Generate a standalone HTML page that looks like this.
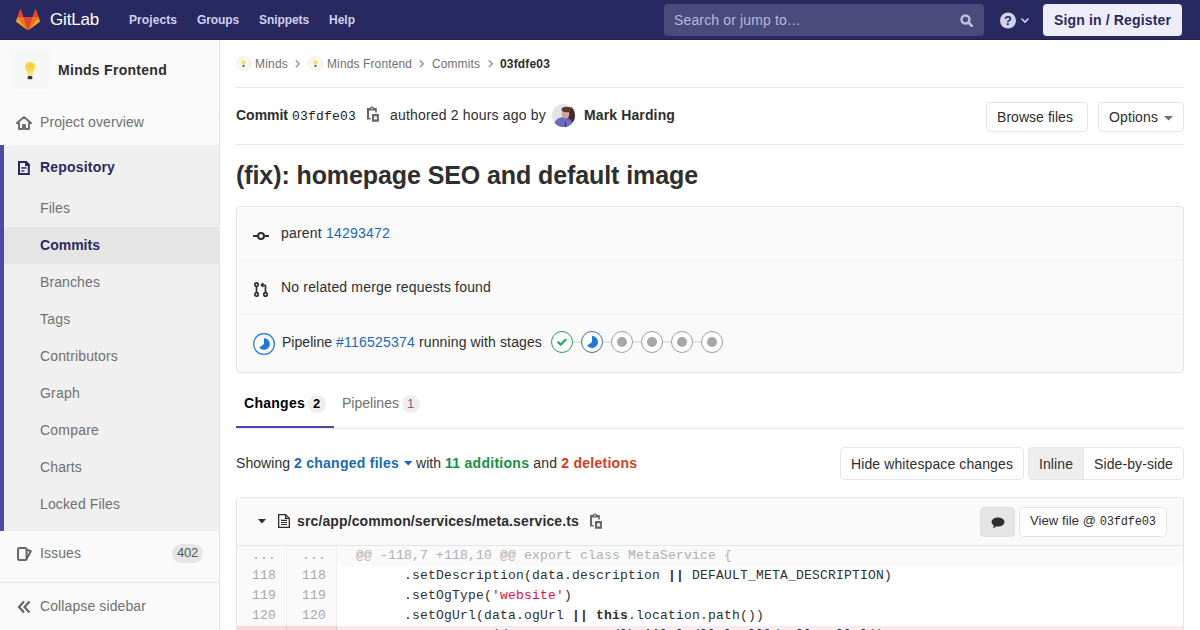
<!DOCTYPE html>
<html><head><meta charset="utf-8"><style>
*{box-sizing:border-box;margin:0;padding:0}
html,body{width:1200px;height:630px;overflow:hidden;background:#fff;font-family:"Liberation Sans",sans-serif;color:#2e2e2e;font-size:14px}
.abs{position:absolute}
.t{position:absolute;white-space:pre;line-height:1}
#hdr{position:absolute;left:0;top:0;width:1200px;height:40px;background:#292961;border-bottom:1px solid #1f1f50}
.btn{position:absolute;border:1px solid #e5e5e5;border-radius:4px;background:#fff}
.hr{position:absolute;height:1px;background:#e5e5e5}
.ln{position:absolute;width:50px;height:20px;background:#fafafa;border-right:1px solid #f0f0f0;color:#a8a8a8;font-family:"Liberation Mono",monospace;font-size:13px;letter-spacing:.2px;text-align:right;padding-right:10px;line-height:20px;white-space:pre}
.code{position:absolute;left:337px;width:846px;height:20px;font-family:"Liberation Mono",monospace;font-size:13px;letter-spacing:.2px;line-height:20px;white-space:pre;padding-left:19px;color:#2e2e2e}
</style></head><body>
<div id="hdr"></div><svg class="abs" style="left:16px;top:9px" width="24" height="22" viewBox="0 0 24 22">
<path fill="#e24329" d="M12 21.6l4.4-13.6H7.6z"/><path fill="#fc6d26" d="M12 21.6L7.6 8H1.4z"/>
<path fill="#fca326" d="M1.4 8L.1 12.1c-.1.4 0 .8.3 1L12 21.6z"/><path fill="#e24329" d="M1.4 8h6.2L4.9.2c-.1-.4-.7-.4-.9 0z"/>
<path fill="#fc6d26" d="M12 21.6L16.4 8h6.2z"/><path fill="#fca326" d="M22.6 8l1.3 4.1c.1.4 0 .8-.3 1L12 21.6z"/>
<path fill="#e24329" d="M22.6 8h-6.2L19.1.2c.1-.4.7-.4.9 0z"/></svg><div class="t" style="left:50px;top:11px;font-size:17px;font-family:'Liberation Sans',sans-serif;"><span style="letter-spacing:-0.181px;font-weight:normal;font-family:'Liberation Sans',sans-serif;font-size:17px;color:#fff;">GitLab</span></div>
<div class="t" style="left:129px;top:14px;font-size:12px;font-family:'Liberation Sans',sans-serif;"><span style="letter-spacing:0.081px;font-weight:bold;font-family:'Liberation Sans',sans-serif;font-size:12px;color:#d1d1f0;">Projects</span></div>
<div class="t" style="left:197px;top:14px;font-size:12px;font-family:'Liberation Sans',sans-serif;"><span style="letter-spacing:-0.111px;font-weight:bold;font-family:'Liberation Sans',sans-serif;font-size:12px;color:#d1d1f0;">Groups</span></div>
<div class="t" style="left:259px;top:14px;font-size:12px;font-family:'Liberation Sans',sans-serif;"><span style="letter-spacing:-0.084px;font-weight:bold;font-family:'Liberation Sans',sans-serif;font-size:12px;color:#d1d1f0;">Snippets</span></div>
<div class="t" style="left:329px;top:14px;font-size:12px;font-family:'Liberation Sans',sans-serif;"><span style="letter-spacing:-0.001px;font-weight:bold;font-family:'Liberation Sans',sans-serif;font-size:12px;color:#d1d1f0;">Help</span></div>
<div class="abs" style="left:664px;top:4px;width:320px;height:32px;border-radius:4px;background:#4a4a7d"></div><div class="t" style="left:674px;top:13px;font-size:14px;font-family:'Liberation Sans',sans-serif;"><span style="letter-spacing:0.139px;font-weight:normal;font-family:'Liberation Sans',sans-serif;font-size:14px;color:#b8b8d9;">Search or jump to…</span></div>
<svg class="abs" style="left:960px;top:14px" width="14" height="13" viewBox="0 0 14 13"><circle cx="5.5" cy="5.5" r="4" fill="none" stroke="#c0c0e0" stroke-width="2.4"/><path d="M8.5 8.5l3.3 3.3" stroke="#c0c0e0" stroke-width="2.6" stroke-linecap="round"/></svg><svg class="abs" style="left:1000px;top:12px" width="32" height="17" viewBox="0 0 32 17"><circle cx="8" cy="8.5" r="8" fill="#d1d1f0"/>
<text x="8" y="13.2" text-anchor="middle" font-family="Liberation Sans" font-weight="bold" font-size="13" fill="#292961">?</text>
<path d="M21.5 6.5l3.5 3.5 3.5-3.5" fill="none" stroke="#d1d1f0" stroke-width="1.6"/></svg><div class="abs" style="left:1043px;top:4px;width:139px;height:32px;border-radius:4px;background:#eeeefb"></div><div class="t" style="left:1054px;top:13px;font-size:14px;font-family:'Liberation Sans',sans-serif;"><span style="letter-spacing:0.147px;font-weight:bold;font-family:'Liberation Sans',sans-serif;font-size:14px;color:#292961;">Sign in / Register</span></div>
<div class="abs" style="left:0;top:40px;width:220px;height:590px;background:#fafafa;border-right:1px solid #e5e5e5"></div><div class="abs" style="left:10px;top:49px;width:40px;height:40px;border-radius:4px;background:#f7f7f7"></div><svg class="abs" style="left:23px;top:61px" width="14" height="19" viewBox="0 0 14 19"><defs><radialGradient id="bg1" cx="50%" cy="45%" r="55%"><stop offset="0" stop-color="#f9c23c"/><stop offset="1" stop-color="#f7e35a"/></radialGradient></defs>
<path d="M3.6 9.5h6.8l-1 5.5H4.6z" fill="#f3e47c"/><circle cx="7" cy="6" r="5.3" fill="url(#bg1)"/><rect x="4.6" y="15" width="4.8" height="3.2" rx="1" fill="#3a3a3a"/></svg><div class="t" style="left:58px;top:63px;font-size:14px;font-family:'Liberation Sans',sans-serif;"><span style="letter-spacing:0.287px;font-weight:bold;font-family:'Liberation Sans',sans-serif;font-size:14px;color:#2e2e2e;">Minds Frontend</span></div>
<svg class="abs" style="left:16px;top:116px" width="16" height="14" viewBox="0 0 16 14"><path d="M8 1L1 7h2v6h4V9h2v4h4V7h2z" fill="none" stroke="#707070" stroke-width="2" stroke-linejoin="round"/></svg><div class="t" style="left:40px;top:115px;font-size:14px;font-family:'Liberation Sans',sans-serif;"><span style="letter-spacing:0.081px;font-weight:normal;font-family:'Liberation Sans',sans-serif;font-size:14px;color:#707070;">Project overview</span></div>
<div class="abs" style="left:0;top:145px;width:219px;height:386px;background:#f0f0f0;border-left:4px solid #4b4ba3"></div><svg class="abs" style="left:18px;top:161px" width="12" height="14" viewBox="0 0 12 14"><path d="M1 1h6.8L10.8 4v9H1z" fill="none" stroke="#292961" stroke-width="2"/><path d="M7 0h1.5l3.5 3.5V5H7z" fill="#292961"/><rect x="3.2" y="6.2" width="5.4" height="1.5" fill="#292961"/><rect x="3.2" y="9.3" width="3.3" height="1.3" fill="#292961"/></svg><div class="t" style="left:40px;top:160px;font-size:14px;font-family:'Liberation Sans',sans-serif;"><span style="letter-spacing:0.188px;font-weight:bold;font-family:'Liberation Sans',sans-serif;font-size:14px;color:#292961;">Repository</span></div>
<div class="abs" style="left:4px;top:227px;width:215px;height:37px;background:#e5e5e5"></div><div class="t" style="left:40px;top:201px;font-size:14px;font-family:'Liberation Sans',sans-serif;"><span style="letter-spacing:0.088px;font-weight:normal;font-family:'Liberation Sans',sans-serif;font-size:14px;color:#707070;">Files</span></div>
<div class="t" style="left:40px;top:238px;font-size:14px;font-family:'Liberation Sans',sans-serif;"><span style="letter-spacing:0.015px;font-weight:bold;font-family:'Liberation Sans',sans-serif;font-size:14px;color:#292961;">Commits</span></div>
<div class="t" style="left:40px;top:275px;font-size:14px;font-family:'Liberation Sans',sans-serif;"><span style="letter-spacing:0.107px;font-weight:normal;font-family:'Liberation Sans',sans-serif;font-size:14px;color:#707070;">Branches</span></div>
<div class="t" style="left:40px;top:312px;font-size:14px;font-family:'Liberation Sans',sans-serif;"><span style="letter-spacing:0.219px;font-weight:normal;font-family:'Liberation Sans',sans-serif;font-size:14px;color:#707070;">Tags</span></div>
<div class="t" style="left:40px;top:349px;font-size:14px;font-family:'Liberation Sans',sans-serif;"><span style="letter-spacing:0.145px;font-weight:normal;font-family:'Liberation Sans',sans-serif;font-size:14px;color:#707070;">Contributors</span></div>
<div class="t" style="left:40px;top:386px;font-size:14px;font-family:'Liberation Sans',sans-serif;"><span style="letter-spacing:0.218px;font-weight:normal;font-family:'Liberation Sans',sans-serif;font-size:14px;color:#707070;">Graph</span></div>
<div class="t" style="left:40px;top:423px;font-size:14px;font-family:'Liberation Sans',sans-serif;"><span style="letter-spacing:0.203px;font-weight:normal;font-family:'Liberation Sans',sans-serif;font-size:14px;color:#707070;">Compare</span></div>
<div class="t" style="left:40px;top:460px;font-size:14px;font-family:'Liberation Sans',sans-serif;"><span style="letter-spacing:0.128px;font-weight:normal;font-family:'Liberation Sans',sans-serif;font-size:14px;color:#707070;">Charts</span></div>
<div class="t" style="left:40px;top:497px;font-size:14px;font-family:'Liberation Sans',sans-serif;"><span style="letter-spacing:0.117px;font-weight:normal;font-family:'Liberation Sans',sans-serif;font-size:14px;color:#707070;">Locked Files</span></div>
<svg class="abs" style="left:17px;top:547px" width="15" height="14" viewBox="0 0 15 14"><rect x="1" y="1" width="8.6" height="12" rx="1.5" fill="none" stroke="#666" stroke-width="2"/><path d="M9.6 2.6l4.2 1.6-4.2 7.6" fill="none" stroke="#666" stroke-width="2" stroke-linejoin="round"/></svg><div class="t" style="left:40px;top:546px;font-size:14px;font-family:'Liberation Sans',sans-serif;"><span style="letter-spacing:0.090px;font-weight:normal;font-family:'Liberation Sans',sans-serif;font-size:14px;color:#707070;">Issues</span></div>
<div class="abs" style="left:172px;top:544px;width:31px;height:19px;border-radius:10px;background:#e5e5e5"></div><div class="t" style="left:177px;top:546px;font-size:13px;font-family:'Liberation Sans',sans-serif;"><span style="letter-spacing:-0.230px;font-weight:normal;font-family:'Liberation Sans',sans-serif;font-size:13px;color:#555;">402</span></div>
<div class="abs" style="left:0;top:582px;width:219px;height:1px;background:#e5e5e5"></div><svg class="abs" style="left:17px;top:600px" width="14" height="14" viewBox="0 0 14 14"><path d="M7 1.5L2 7l5 5.5M12.5 1.5L7.5 7l5 5.5" fill="none" stroke="#666" stroke-width="2.2"/></svg><div class="t" style="left:40px;top:599px;font-size:14px;font-family:'Liberation Sans',sans-serif;"><span style="letter-spacing:0.107px;font-weight:normal;font-family:'Liberation Sans',sans-serif;font-size:14px;color:#707070;">Collapse sidebar</span></div>
<svg class="abs" style="left:236px;top:56px" width="16" height="16"><circle cx="7.5" cy="7.5" r="7" fill="#f7f7f2" stroke="#ececec"/><ellipse cx="7.5" cy="6.5" rx="2.2" ry="2.5" fill="#f5e26a"/><rect x="6.5" y="9" width="2" height="2" fill="#666"/></svg><div class="t" style="left:255px;top:58px;font-size:12px;font-family:'Liberation Sans',sans-serif;"><span style="letter-spacing:0.198px;font-weight:normal;font-family:'Liberation Sans',sans-serif;font-size:12px;color:#707070;">Minds</span></div>
<svg class="abs" style="left:295px;top:59px" width="6" height="10"><path d="M.8 1.2L4.3 4.7.8 8.2" fill="none" stroke="#9a9a9a" stroke-width="1.5"/></svg><svg class="abs" style="left:308px;top:56px" width="16" height="16"><circle cx="7.5" cy="7.5" r="7" fill="#f7f7f2" stroke="#ececec"/><ellipse cx="7.5" cy="6.5" rx="2.2" ry="2.5" fill="#f5e26a"/><rect x="6.5" y="9" width="2" height="2" fill="#666"/></svg><div class="t" style="left:327px;top:58px;font-size:12px;font-family:'Liberation Sans',sans-serif;"><span style="letter-spacing:0.116px;font-weight:normal;font-family:'Liberation Sans',sans-serif;font-size:12px;color:#707070;">Minds Frontend</span></div>
<svg class="abs" style="left:419px;top:59px" width="6" height="10"><path d="M.8 1.2L4.3 4.7.8 8.2" fill="none" stroke="#9a9a9a" stroke-width="1.5"/></svg><div class="t" style="left:432px;top:58px;font-size:12px;font-family:'Liberation Sans',sans-serif;"><span style="letter-spacing:0.095px;font-weight:normal;font-family:'Liberation Sans',sans-serif;font-size:12px;color:#707070;">Commits</span></div>
<svg class="abs" style="left:488px;top:59px" width="6" height="10"><path d="M.8 1.2L4.3 4.7.8 8.2" fill="none" stroke="#9a9a9a" stroke-width="1.5"/></svg><div class="t" style="left:500px;top:58px;font-size:12px;font-family:'Liberation Sans',sans-serif;"><span style="letter-spacing:0.164px;font-weight:bold;font-family:'Liberation Sans',sans-serif;font-size:12px;color:#2e2e2e;">03fdfe03</span></div>
<div class="hr" style="left:236px;top:87px;width:948px"></div><div class="t" style="left:236px;top:108px;font-size:14px;font-family:'Liberation Sans',sans-serif;"><span style="letter-spacing:-0.018px;font-weight:bold;font-family:'Liberation Sans',sans-serif;font-size:14px;color:#2e2e2e;">Commit</span><span style="letter-spacing:0.110px;font-weight:normal;font-family:'Liberation Sans',sans-serif;font-size:14px;"> </span><span style="letter-spacing:0.199px;font-weight:normal;font-family:'Liberation Mono',monospace;font-size:13px;color:#1a1a1a;">03fdfe03</span></div>
<svg class="abs" style="left:367px;top:106px" width="12" height="16" viewBox="0 0 12 16"><path fill="#666" fill-rule="evenodd" d="M0 2H2.2L4.9 .2 7.6 2H9.8V6.6H8.2V4.5H2.1V11.9H3.6V13.6H0ZM4.1 2.5a.8.8 0 1 0 1.6 0a.8.8 0 1 0-1.6 0Z"/><path fill="#666" fill-rule="evenodd" d="M5 8H11.9V15.7H5ZM7.1 10.2V13.6H9.9V10.2Z"/></svg><div class="t" style="left:390px;top:108px;font-size:14px;font-family:'Liberation Sans',sans-serif;"><span style="letter-spacing:0.184px;font-weight:normal;font-family:'Liberation Sans',sans-serif;font-size:14px;color:#2e2e2e;">authored 2 hours ago by</span></div>
<svg class="abs" style="left:552px;top:104px" width="23" height="23" viewBox="0 0 23 23"><defs><clipPath id="avc"><circle cx="11.5" cy="11.5" r="11.5"/></clipPath><filter id="bl"><feGaussianBlur stdDeviation=".7"/></filter></defs><g clip-path="url(#avc)"><rect width="23" height="23" fill="#e4e2e6"/><g filter="url(#bl)"><ellipse cx="20" cy="12" rx="5" ry="9" fill="#4a2830"/><ellipse cx="11.5" cy="22" rx="10" ry="9" fill="#6b6cc0"/><ellipse cx="13.5" cy="10" rx="3.8" ry="4.3" fill="#d2a39a"/><ellipse cx="14.5" cy="5.5" rx="5" ry="2.8" fill="#5b3a2c"/><path d="M13.5 16l1 7h-2z" fill="#3b3a78"/></g></g></svg><div class="t" style="left:584px;top:108px;font-size:14px;font-family:'Liberation Sans',sans-serif;"><span style="letter-spacing:0.128px;font-weight:bold;font-family:'Liberation Sans',sans-serif;font-size:14px;color:#2e2e2e;">Mark Harding</span></div>
<div class="btn" style="left:986px;top:102px;width:102px;height:30px"></div><div class="t" style="left:997px;top:110px;font-size:14px;font-family:'Liberation Sans',sans-serif;"><span style="letter-spacing:0.044px;font-weight:normal;font-family:'Liberation Sans',sans-serif;font-size:14px;color:#2e2e2e;">Browse files</span></div>
<div class="btn" style="left:1098px;top:102px;width:86px;height:30px"></div><div class="t" style="left:1109px;top:110px;font-size:14px;font-family:'Liberation Sans',sans-serif;"><span style="letter-spacing:0.107px;font-weight:normal;font-family:'Liberation Sans',sans-serif;font-size:14px;color:#2e2e2e;">Options</span></div>
<svg class="abs" style="left:1164px;top:116px" width="10" height="5"><path d="M0 0h9L4.5 4.5z" fill="#707070"/></svg><div class="hr" style="left:236px;top:144px;width:948px"></div><div class="t" style="left:236px;top:163px;font-size:25px;font-family:'Liberation Sans',sans-serif;"><span style="letter-spacing:-0.090px;font-weight:bold;font-family:'Liberation Sans',sans-serif;font-size:25px;color:#2e2e2e;">(fix): homepage SEO and default image</span></div>
<div class="abs" style="left:236px;top:206px;width:948px;height:167px;border:1px solid #e5e5e5;border-radius:4px;background:#fafafa"></div><div class="hr" style="left:237px;top:260px;width:946px;background:#f0f0f0"></div><div class="hr" style="left:237px;top:314px;width:946px;background:#f0f0f0"></div><svg class="abs" style="left:253px;top:230px" width="16" height="12" viewBox="0 0 16 12"><path d="M0 6h4.5M11.5 6H16" stroke="#2e2e2e" stroke-width="2"/><circle cx="8" cy="6" r="3" fill="none" stroke="#2e2e2e" stroke-width="2"/></svg><div class="t" style="left:281px;top:226px;font-size:14px;font-family:'Liberation Sans',sans-serif;"><span style="letter-spacing:0.202px;font-weight:normal;font-family:'Liberation Sans',sans-serif;font-size:14px;color:#2e2e2e;">parent </span><span style="letter-spacing:0.214px;font-weight:normal;font-family:'Liberation Sans',sans-serif;font-size:14px;color:#1b69b6;">14293472</span></div>
<svg class="abs" style="left:253px;top:282px" width="16" height="16" viewBox="0 0 16 16"><g fill="none" stroke="#2e2e2e" stroke-width="1.7"><circle cx="3.5" cy="2.6" r="1.7"/><circle cx="3.5" cy="12.4" r="1.7"/><circle cx="12.5" cy="12.4" r="1.7"/><path d="M3.5 4.3v6.4M12.5 10.7V4.6c0-1-.6-1.6-1.6-1.6H9"/><path d="M10.3 1.2L8.5 3l1.8 1.8"/></g></svg><div class="t" style="left:281px;top:280px;font-size:14px;font-family:'Liberation Sans',sans-serif;"><span style="letter-spacing:0.172px;font-weight:normal;font-family:'Liberation Sans',sans-serif;font-size:14px;color:#2e2e2e;">No related merge requests found</span></div>
<svg class="abs" style="left:253px;top:333px" width="22" height="22" viewBox="0 0 14 14"><path fill="#1f78d1" fill-rule="evenodd" d="M0 7a7 7 0 1 1 14 0A7 7 0 0 1 0 7zM13.2 7A6.2 6.2 0 1 0 .8 7a6.2 6.2 0 0 0 12.4 0z"/><path fill="#1f78d1" d="M7 3.3c2.1 0 3.7 1.7 3.7 3.7S9.1 10.7 7 10.7c-1.2 0-2.3-.6-3-1.5L7 7V3.3"/></svg><div class="t" style="left:282px;top:335px;font-size:14px;font-family:'Liberation Sans',sans-serif;"><span style="letter-spacing:0.033px;font-weight:normal;font-family:'Liberation Sans',sans-serif;font-size:14px;color:#2e2e2e;">Pipeline </span><span style="letter-spacing:0.214px;font-weight:normal;font-family:'Liberation Sans',sans-serif;font-size:14px;color:#1b69b6;">#116525374</span><span style="letter-spacing:0.124px;font-weight:normal;font-family:'Liberation Sans',sans-serif;font-size:14px;color:#2e2e2e;"> running with stages</span></div>
<div class="abs" style="left:573px;top:341px;width:130px;height:2px;background:#e5e5e5"></div><svg class="abs" style="left:551px;top:331px" width="22" height="22" viewBox="0 0 22 22"><circle cx="11" cy="11" r="10.5" fill="#fff" stroke="#2a9d5c" stroke-width="1"/><path d="M7.3 11.3l2.4 2.4 4.9-4.9" fill="none" stroke="#1aaa55" stroke-width="2.2" stroke-linecap="round" stroke-linejoin="round"/></svg><svg class="abs" style="left:581px;top:331px" width="22" height="22" viewBox="0 0 22 22"><circle cx="11" cy="11" r="10.5" fill="#fff" stroke="#3b6fb6" stroke-width="1"/><path fill="#1f78d1" d="M11 5c3.3 0 6 2.7 6 6s-2.7 6-6 6c-2 0-3.7-1-4.8-2.4L11 11V5"/></svg><svg class="abs" style="left:611px;top:331px" width="22" height="22" viewBox="0 0 22 22"><circle cx="11" cy="11" r="10.5" fill="#fff" stroke="#9e9e9e" stroke-width="1"/><circle cx="11" cy="11" r="5" fill="#a7a7a7"/></svg><svg class="abs" style="left:641px;top:331px" width="22" height="22" viewBox="0 0 22 22"><circle cx="11" cy="11" r="10.5" fill="#fff" stroke="#9e9e9e" stroke-width="1"/><circle cx="11" cy="11" r="5" fill="#a7a7a7"/></svg><svg class="abs" style="left:671px;top:331px" width="22" height="22" viewBox="0 0 22 22"><circle cx="11" cy="11" r="10.5" fill="#fff" stroke="#9e9e9e" stroke-width="1"/><circle cx="11" cy="11" r="5" fill="#a7a7a7"/></svg><svg class="abs" style="left:701px;top:331px" width="22" height="22" viewBox="0 0 22 22"><circle cx="11" cy="11" r="10.5" fill="#fff" stroke="#9e9e9e" stroke-width="1"/><circle cx="11" cy="11" r="5" fill="#a7a7a7"/></svg><div class="hr" style="left:236px;top:428px;width:948px"></div><div class="abs" style="left:236px;top:426px;width:98px;height:2px;background:#4b4ba3"></div><div class="t" style="left:244px;top:396px;font-size:14px;font-family:'Liberation Sans',sans-serif;"><span style="letter-spacing:0.268px;font-weight:bold;font-family:'Liberation Sans',sans-serif;font-size:14px;color:#000;">Changes</span></div>
<div class="abs" style="left:308px;top:395px;width:18px;height:18px;border-radius:9px;background:#eee"></div><div class="t" style="left:313px;top:397px;font-size:13px;font-family:'Liberation Sans',sans-serif;"><span style="letter-spacing:-0.230px;font-weight:bold;font-family:'Liberation Sans',sans-serif;font-size:13px;color:#000;">2</span></div>
<div class="t" style="left:342px;top:396px;font-size:14px;font-family:'Liberation Sans',sans-serif;"><span style="letter-spacing:0.021px;font-weight:normal;font-family:'Liberation Sans',sans-serif;font-size:14px;color:#707070;">Pipelines</span></div>
<div class="abs" style="left:402px;top:395px;width:18px;height:18px;border-radius:9px;background:#eee"></div><div class="t" style="left:407px;top:397px;font-size:13px;font-family:'Liberation Sans',sans-serif;"><span style="letter-spacing:-0.230px;font-weight:normal;font-family:'Liberation Sans',sans-serif;font-size:13px;color:#707070;">1</span></div>
<div class="t" style="left:236px;top:456px;font-size:14px;font-family:'Liberation Sans',sans-serif;"><span style="letter-spacing:0.051px;font-weight:normal;font-family:'Liberation Sans',sans-serif;font-size:14px;color:#2e2e2e;">Showing </span><span style="letter-spacing:0.257px;font-weight:bold;font-family:'Liberation Sans',sans-serif;font-size:14px;color:#1b69b6;">2 changed files</span></div>
<svg class="abs" style="left:404px;top:461px" width="9" height="5"><path d="M0 0h8.5L4.25 4.5z" fill="#1b69b6"/></svg><div class="t" style="left:416px;top:456px;font-size:14px;font-family:'Liberation Sans',sans-serif;"><span style="letter-spacing:0.043px;font-weight:normal;font-family:'Liberation Sans',sans-serif;font-size:14px;color:#2e2e2e;">with </span><span style="letter-spacing:0.276px;font-weight:bold;font-family:'Liberation Sans',sans-serif;font-size:14px;color:#168f48;">11 additions</span><span style="letter-spacing:0.172px;font-weight:normal;font-family:'Liberation Sans',sans-serif;font-size:14px;color:#2e2e2e;"> and </span><span style="letter-spacing:0.261px;font-weight:bold;font-family:'Liberation Sans',sans-serif;font-size:14px;color:#db3b21;">2 deletions</span></div>
<div class="btn" style="left:840px;top:447px;width:184px;height:33px"></div><div class="t" style="left:851px;top:457px;font-size:14px;font-family:'Liberation Sans',sans-serif;"><span style="letter-spacing:0.107px;font-weight:normal;font-family:'Liberation Sans',sans-serif;font-size:14px;color:#2e2e2e;">Hide whitespace changes</span></div>
<div class="btn" style="left:1028px;top:447px;width:156px;height:33px;overflow:hidden"><div class="abs" style="left:0;top:0;width:55px;height:31px;background:#eee;border-right:1px solid #e5e5e5"></div></div><div class="t" style="left:1039px;top:457px;font-size:14px;font-family:'Liberation Sans',sans-serif;"><span style="letter-spacing:0.089px;font-weight:normal;font-family:'Liberation Sans',sans-serif;font-size:14px;color:#2e2e2e;">Inline</span></div>
<div class="t" style="left:1094px;top:457px;font-size:14px;font-family:'Liberation Sans',sans-serif;"><span style="letter-spacing:0.099px;font-weight:normal;font-family:'Liberation Sans',sans-serif;font-size:14px;color:#2e2e2e;">Side-by-side</span></div>
<div class="abs" style="left:236px;top:497px;width:948px;height:140px;border:1px solid #e5e5e5;border-radius:4px 4px 0 0;background:#fff;overflow:hidden"><div class="abs" style="left:0;top:0;width:946px;height:48px;background:#fafafa;border-bottom:1px solid #e5e5e5"></div></div><svg class="abs" style="left:258px;top:519px" width="8" height="5"><path d="M0 0h8L4 4.5z" fill="#2e2e2e"/></svg><svg class="abs" style="left:278px;top:514px" width="12" height="14" viewBox="0 0 12 14"><g fill="none" stroke="#2e2e2e" stroke-width="1.3"><path d="M.65 .65H7.6L11.35 4.4V13.35H.65Z"/><path d="M7.6 .65V4.4H11.35"/><path d="M3 6.4H9M3 8.5H9M3 10.5H9" stroke-width="1.1"/></g></svg><div class="t" style="left:297px;top:514px;font-size:14px;font-family:'Liberation Sans',sans-serif;"><span style="letter-spacing:0.127px;font-weight:bold;font-family:'Liberation Sans',sans-serif;font-size:14px;color:#2e2e2e;">src/app/common/services/meta.service.ts</span></div>
<svg class="abs" style="left:590px;top:513px" width="12" height="16" viewBox="0 0 12 16"><path fill="#666" fill-rule="evenodd" d="M0 2H2.2L4.9 .2 7.6 2H9.8V6.6H8.2V4.5H2.1V11.9H3.6V13.6H0ZM4.1 2.5a.8.8 0 1 0 1.6 0a.8.8 0 1 0-1.6 0Z"/><path fill="#666" fill-rule="evenodd" d="M5 8H11.9V15.7H5ZM7.1 10.2V13.6H9.9V10.2Z"/></svg><div class="abs" style="left:980px;top:507px;width:35px;height:30px;border-radius:4px;background:#e5e5e5;border:1px solid #e0e0e0"></div><svg class="abs" style="left:991px;top:517px" width="14" height="12" viewBox="0 0 14 12"><ellipse cx="7" cy="5" rx="6.5" ry="4.5" fill="#2e2e2e"/><path d="M3 8l-1 3.5 4.5-3z" fill="#2e2e2e"/></svg><div class="btn" style="left:1019px;top:507px;width:148px;height:30px"></div><div class="t" style="left:1030px;top:514px;font-size:13px;font-family:'Liberation Sans',sans-serif;"><span style="letter-spacing:0.098px;font-weight:normal;font-family:'Liberation Sans',sans-serif;font-size:13px;color:#2e2e2e;">View file @ </span><span style="letter-spacing:-0.201px;font-weight:normal;font-family:'Liberation Mono',monospace;font-size:12px;color:#2e2e2e;">03fdfe03</span></div>
<div class="ln" style="left:237px;top:546px;background:#fafafa;border-right-color:#f0f0f0">...</div><div class="ln" style="left:287px;top:546px;background:#fafafa;border-right-color:#f0f0f0">...</div><div class="code" style="top:546px;background:#fafafa;color:#b0b0b0;">@@ -118,7 +118,10 @@ export class MetaService {</div>
<div class="ln" style="left:237px;top:566px;background:#fafafa;border-right-color:#f0f0f0">118</div><div class="ln" style="left:287px;top:566px;background:#fafafa;border-right-color:#f0f0f0">118</div><div class="code" style="top:566px;background:#fff;color:#2e2e2e;">      .setDescription(data.description <b>||</b> DEFAULT_META_DESCRIPTION)</div>
<div class="ln" style="left:237px;top:586px;background:#fafafa;border-right-color:#f0f0f0">119</div><div class="ln" style="left:287px;top:586px;background:#fafafa;border-right-color:#f0f0f0">119</div><div class="code" style="top:586px;background:#fff;color:#2e2e2e;">      .setOgType(<span style="color:#d14">'website'</span>)</div>
<div class="ln" style="left:237px;top:606px;background:#fafafa;border-right-color:#f0f0f0">120</div><div class="ln" style="left:287px;top:606px;background:#fafafa;border-right-color:#f0f0f0">120</div><div class="code" style="top:606px;background:#fff;color:#2e2e2e;">      .setOgUrl(data.ogUrl <b>||</b> <b>this</b>.location.path())</div>
<div class="ln" style="left:237px;top:626px;background:#f9d7dc;border-right-color:#e0c0c5">121</div><div class="ln" style="left:287px;top:626px;background:#f9d7dc;border-right-color:#e0c0c5"></div><div class="code" style="top:626px;background:#fbe9eb;color:#2e2e2e;line-height:18px">      .aaaaaaaaaa(daaaaaaaaaaaaadlba<b>||</b>laladllalaallldaallaaallal()</div>
</body></html>
